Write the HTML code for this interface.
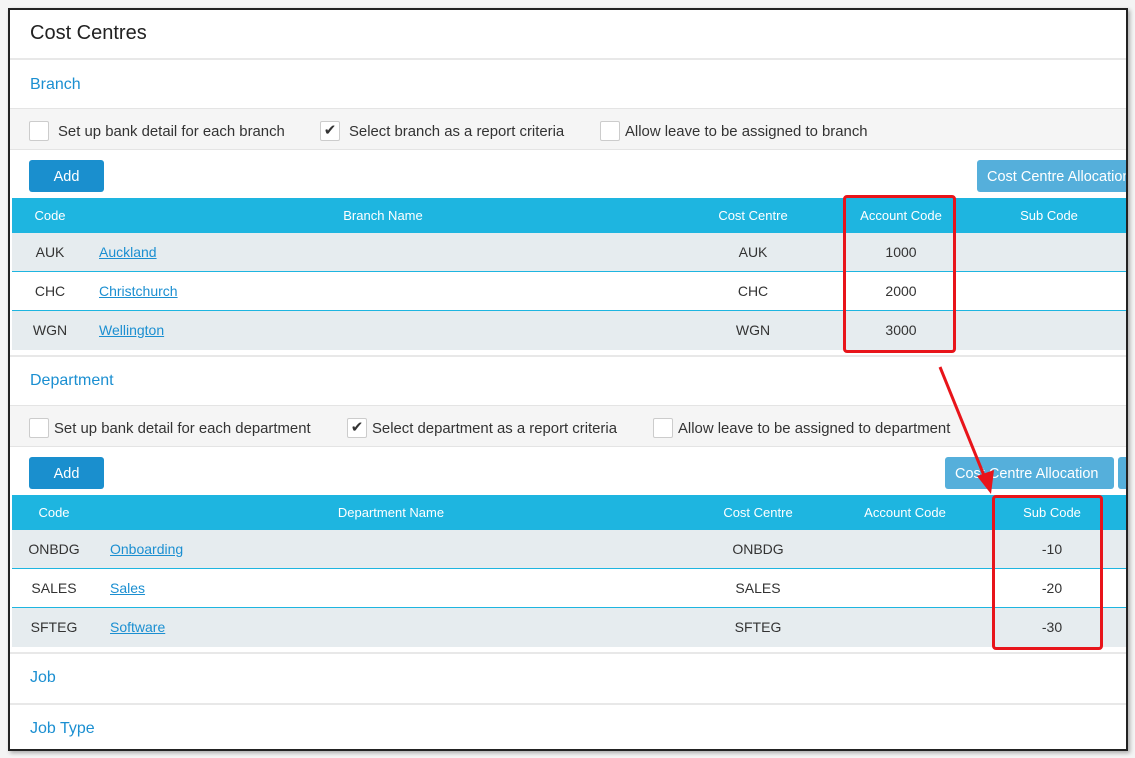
<!DOCTYPE html>
<html><head><style>
*{margin:0;padding:0;box-sizing:border-box}
body{width:1135px;height:758px;background:#f4f4f4;font-family:"Liberation Sans",sans-serif;position:relative;overflow:hidden;color:#333}
#f{position:absolute;left:8px;top:8px;width:1120px;height:743px;border:2px solid #222;background:#fff;overflow:hidden;box-shadow:2px 2px 4px rgba(0,0,0,.3)}
.a{position:absolute}
.t{font-size:20px;color:#222}
.h{font-size:16px;color:#1b8fd1}
.line{position:absolute;left:0;right:0;height:2px;background:#e8e8e8}
.band{position:absolute;left:0;right:0;height:42px;background:#f5f5f5;border-top:1px solid #e4e4e4;border-bottom:1px solid #e4e4e4}
.cb{position:absolute;width:20px;height:20px;border:1px solid #ccc;background:#fff;border-radius:2px}
.lab{position:absolute;font-size:14.9px;color:#333;line-height:20px}
.btn{position:absolute;background:#1a8fce;color:#fff;font-size:14.5px;text-align:center;border-radius:3px;height:32px;line-height:34px}
.btn2{position:absolute;background:#55afdb;color:#fff;font-size:14.5px;border-radius:3px;height:32px;line-height:34px;padding-left:10px;white-space:nowrap;overflow:hidden}
.hd{position:absolute;left:2px;right:0;height:35px;background:#1eb5e0;color:#fff;font-size:13px}
.hd span,.r span{position:absolute;top:0;line-height:35px;transform:translateX(-50%);white-space:nowrap}
.r{position:absolute;left:2px;right:0;height:39px;font-size:14px;border-bottom:1px solid #1eb5e0}
.r span{line-height:38px}
.r.g{background:#e6ecef}
.r a{position:absolute;line-height:38px;color:#1b8fd1;text-decoration:underline}
.red{position:absolute;border:3px solid #e8141a;border-radius:4px}
</style></head><body>
<div id="f">
<div class="a t" style="left:20px;top:12px">Cost Centres</div>
<div class="line" style="top:48px"></div>
<div class="a h" style="left:20px;top:66px">Branch</div>
<div class="band" style="top:98px"></div>
<div class="cb" style="left:19px;top:111px"></div><div class="lab" style="left:48px;top:112px">Set up bank detail for each branch</div>
<div class="cb" style="left:310px;top:111px;font-size:15px;text-align:center;line-height:18px">✔</div><div class="lab" style="left:339px;top:112px">Select branch as a report criteria</div>
<div class="cb" style="left:590px;top:111px"></div><div class="lab" style="left:615px;top:112px">Allow leave to be assigned to branch</div>
<div class="btn" style="left:19px;top:150px;width:75px">Add</div>
<div class="btn2" style="left:967px;top:150px;width:160px">Cost Centre Allocation</div>
<div class="hd" style="top:188px"><span style="left:38px">Code</span><span style="left:371px">Branch Name</span><span style="left:741px">Cost Centre</span><span style="left:889px">Account Code</span><span style="left:1037px">Sub Code</span></div>
<div class="r g" style="top:223px"><span style="left:38px">AUK</span><a style="left:87px">Auckland</a><span style="left:741px">AUK</span><span style="left:889px">1000</span></div>
<div class="r" style="top:262px"><span style="left:38px">CHC</span><a style="left:87px">Christchurch</a><span style="left:741px">CHC</span><span style="left:889px">2000</span></div>
<div class="r g" style="top:301px;border-bottom:none"><span style="left:38px">WGN</span><a style="left:87px">Wellington</a><span style="left:741px">WGN</span><span style="left:889px">3000</span></div>
<div class="line" style="top:345px"></div>
<div class="a h" style="left:20px;top:362px">Department</div>
<div class="band" style="top:395px"></div>
<div class="cb" style="left:19px;top:408px"></div><div class="lab" style="left:44px;top:409px">Set up bank detail for each department</div>
<div class="cb" style="left:337px;top:408px;font-size:15px;text-align:center;line-height:18px">✔</div><div class="lab" style="left:362px;top:409px">Select department as a report criteria</div>
<div class="cb" style="left:643px;top:408px"></div><div class="lab" style="left:668px;top:409px">Allow leave to be assigned to department</div>
<div class="btn" style="left:19px;top:447px;width:75px">Add</div>
<div class="btn2" style="left:935px;top:447px;width:169px">Cost Centre Allocation</div>
<div class="btn2" style="left:1108px;top:447px;width:20px;padding:0"></div>
<div class="hd" style="top:485px"><span style="left:42px">Code</span><span style="left:379px">Department Name</span><span style="left:746px">Cost Centre</span><span style="left:893px">Account Code</span><span style="left:1040px">Sub Code</span></div>
<div class="r g" style="top:520px"><span style="left:42px">ONBDG</span><a style="left:98px">Onboarding</a><span style="left:746px">ONBDG</span><span style="left:1040px">-10</span></div>
<div class="r" style="top:559px"><span style="left:42px">SALES</span><a style="left:98px">Sales</a><span style="left:746px">SALES</span><span style="left:1040px">-20</span></div>
<div class="r g" style="top:598px;border-bottom:none"><span style="left:42px">SFTEG</span><a style="left:98px">Software</a><span style="left:746px">SFTEG</span><span style="left:1040px">-30</span></div>
<div class="line" style="top:642px"></div>
<div class="a h" style="left:20px;top:659px">Job</div>
<div class="line" style="top:693px"></div>
<div class="a h" style="left:20px;top:710px">Job Type</div>
<div class="red" style="left:833px;top:185px;width:113px;height:158px"></div>
<div class="red" style="left:982px;top:485px;width:111px;height:155px"></div>
<svg class="a" style="left:0;top:0" width="1120" height="743"><line x1="930" y1="357" x2="975" y2="468" stroke="#e8141a" stroke-width="3"/><polygon points="981,484 967,466 984,460" fill="#e8141a"/></svg>
</div>
</body></html>
